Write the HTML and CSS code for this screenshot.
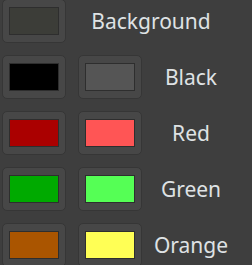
FILE: index.html
```html
<!DOCTYPE html>
<html lang="en">
<head>
  <meta charset="UTF-8" />
  <title>Colors</title>
  <link rel="stylesheet" href="styles.css">
</head>
<body>
  <div class="palette">
    <button class="swatch-btn"><span class="swatch bg"></span></button>
    <div class="label wide">Background</div>

    <button class="swatch-btn"><span class="swatch black"></span></button>
    <button class="swatch-btn"><span class="swatch black-hi"></span></button>
    <div class="label">Black</div>

    <button class="swatch-btn"><span class="swatch red"></span></button>
    <button class="swatch-btn"><span class="swatch red-hi"></span></button>
    <div class="label">Red</div>

    <button class="swatch-btn"><span class="swatch green"></span></button>
    <button class="swatch-btn"><span class="swatch green-hi"></span></button>
    <div class="label">Green</div>

    <button class="swatch-btn"><span class="swatch orange"></span></button>
    <button class="swatch-btn"><span class="swatch orange-hi"></span></button>
    <div class="label">Orange</div>
  </div>
</body>
</html>
```

FILE: styles.css
```css
* { margin: 0; padding: 0; box-sizing: border-box; }
html, body {
  width: 100%; height: 100%;
  background: #3e3e3e;
  font-family: 'Noto Sans', sans-serif;
  overflow: hidden;
}
.palette {
  display: grid;
  grid-template-columns: 64px 64px 74px;
  grid-auto-rows: 44px;
  gap: 12px;
  margin: -1px 0 0 2px;
}
.swatch-btn {
  display: flex;
  padding: 7px 6px;
  background: #474747;
  border: 1px solid #363636;
  border-radius: 5px;
}
.swatch {
  width: 50px;
  height: 28px;
  border: 1px solid #2e2e2e;
}
.label {
  display: flex;
  align-items: center;
  justify-content: center;
  font-size: 21px;
  color: #dfe2e4;
}
.label.wide { grid-column: span 2; margin-left: -4px; }
.bg { background: #3c3d38; }
.black { background: #000; }
.black-hi { background: #555; }
.red { background: #aa0000; }
.red-hi { background: #ff5555; }
.green { background: #00aa00; }
.green-hi { background: #55ff55; }
.orange { background: #aa5500; }
.orange-hi { background: #ffff55; }
```
